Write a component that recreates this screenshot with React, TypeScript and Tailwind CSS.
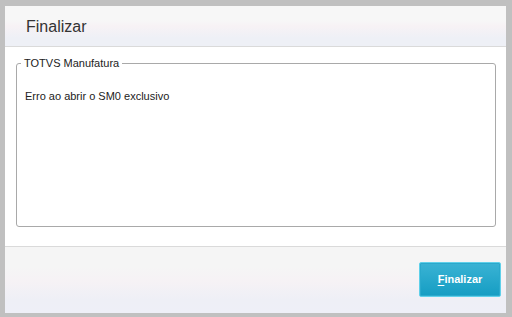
export default function App() {
  return (
    <div
      className="flex h-[317px] w-[512px] flex-col border-solid border-[#c0c0c0] border-t-[6px] border-l-[5px] border-r-[6px] border-b-[4px] bg-white"
      style={{ fontFamily: '"Liberation Sans", Arial, sans-serif' }}
    >
      <header className="flex h-[41px] items-center border-b border-[#dadada] bg-[linear-gradient(to_bottom,#f7f7f7_0%,#f7f7f7_35%,#f7f2f5_50%,#eef0f6_80%,#eef0f6_100%)] pl-[21px] pt-[2px]">
        <h1 className="text-[16px] leading-none text-[#333]">Finalizar</h1>
      </header>

      <main className="flex flex-1 flex-col pl-[11px] pr-[10px] pt-[11px] pb-[19px]">
        <fieldset className="flex-1 rounded-[3px] border border-[#a9a9a9] px-[8px] pt-[22px]">
          <legend className="-ml-[4px] px-[3px] text-[11px] leading-none text-[#222]">
            TOTVS Manufatura
          </legend>
          <p className="text-[11px] leading-none text-[#222]">Erro ao abrir o SM0 exclusivo</p>
        </fieldset>
      </main>

      <footer className="flex h-[67px] items-start justify-end border-t border-[#dadada] bg-[linear-gradient(to_bottom,#f5f5f5_0%,#f5f5f5_30%,#f6f2f5_50%,#eeeff6_80%,#eeeff7_100%)] pr-[5px] pt-[15px]">
        <button className="flex h-[35px] w-[82px] items-center justify-center rounded-[2px] border border-[#5fd0ea] bg-[linear-gradient(to_bottom,#3ab3d4,#159dc3)] text-[11px] font-bold text-white shadow-[inset_0_0_0_1px_#2aa9cc]">
          <span>
            <span className="underline underline-offset-2">F</span>inalizar
          </span>
        </button>
      </footer>
    </div>
  )
}
